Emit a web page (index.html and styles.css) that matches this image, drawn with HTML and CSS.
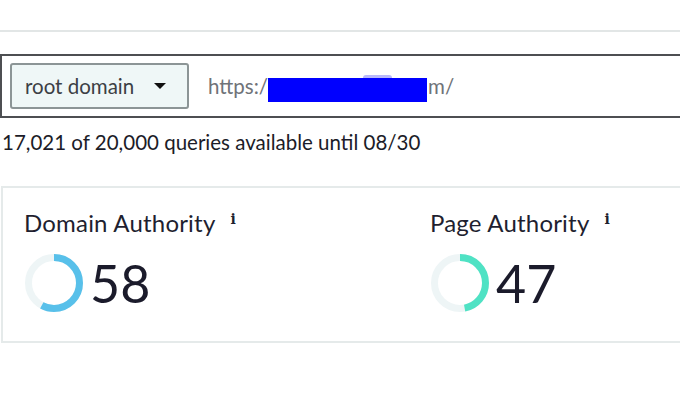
FILE: index.html
```html
<!DOCTYPE html>
<html lang="en">
<head>
    <meta charset="UTF-8">
    <meta name="viewport" content="width=device-width, initial-scale=1.0">
    <title>Link Explorer</title>
    <link rel="stylesheet" href="styles.css">
</head>
<body>

<div class="page">
    <div class="rule"></div>

    <div class="search">
        <div class="dropdown">
            <span>root domain</span>
            <span class="caret"></span>
        </div>
        <div class="url">https:/<span class="redact"><span class="redact-bump"></span></span>m/</div>
    </div>

    <p class="quota">17,021 of 20,000 queries available until 08/30</p>

    <div class="card">
        <div class="metric">
            <h3>Domain Authority<sup class="info">i</sup></h3>
            <div class="score">
                <svg class="ring" width="60" height="60" viewBox="0 0 60 60">
                    <circle class="track" cx="30" cy="30" r="25.5"></circle>
                    <circle class="bar da" cx="30" cy="30" r="25.5" pathLength="100" stroke-dasharray="58 100"></circle>
                </svg>
                <span class="value">58</span>
            </div>
        </div>
        <div class="metric">
            <h3>Page Authority<sup class="info">i</sup></h3>
            <div class="score">
                <svg class="ring" width="60" height="60" viewBox="0 0 60 60">
                    <circle class="track" cx="30" cy="30" r="25.5"></circle>
                    <circle class="bar pa" cx="30" cy="30" r="25.5" pathLength="100" stroke-dasharray="47 100"></circle>
                </svg>
                <span class="value">47</span>
            </div>
        </div>
    </div>
</div>

</body>
</html>
```

FILE: styles.css
```css
body {
    margin: 0;
    padding: 0;
    background-color: #fff;
    font-family: Lato, "Open Sans", sans-serif;
    color: #1f1f30;
    overflow: hidden;
}
.page {
    padding-top: 30px;
}
.rule {
    height: 2px;
    background-color: #e2e6e6;
    margin-bottom: 22px;
}
.search {
    display: flex;
    align-items: center;
    height: 60px;
    padding-left: 8px;
    border: 2px solid #4d4f52;
    border-right: none;
}
.dropdown {
    display: flex;
    align-items: center;
    justify-content: space-between;
    box-sizing: border-box;
    width: 179px;
    height: 46px;
    padding: 0 21px 0 13px;
    background-color: #eff7f7;
    border: 2px solid #8c9596;
    border-radius: 3px;
    font-size: 20.5px;
    color: #3c3f45;
}
.caret {
    width: 0;
    height: 0;
    border-left: 6px solid transparent;
    border-right: 6px solid transparent;
    border-top: 6px solid #111;
}
.url {
    display: flex;
    align-items: center;
    margin-left: 19px;
    font-size: 20.5px;
    color: #6f7378;
}
.redact {
    position: relative;
    display: inline-block;
    width: 159px;
    height: 24px;
    margin: 7px 1px 0 0;
    background-color: #0000ff;
}
.redact-bump {
    position: absolute;
    left: 95px;
    top: -3px;
    width: 29px;
    height: 3px;
    border-radius: 6px 6px 0 0;
    background-color: #b8b8fa;
}
.quota {
    margin: 12px 0 0 2px;
    font-size: 20.5px;
    line-height: 24px;
    color: #1c1c28;
}
.card {
    display: flex;
    box-sizing: border-box;
    height: 157px;
    margin: 32px 0 0 1px;
    padding: 20px 0 0 21px;
    border: 2px solid #e5eaea;
    border-right: none;
}
.metric {
    flex: 0 0 406px;
}
.metric + .metric {
    flex: 1 1 auto;
}
.metric h3 {
    margin: 0;
    font-size: 24px;
    font-weight: 400;
    line-height: 30px;
    letter-spacing: 0.2px;
}
.info {
    position: relative;
    top: -4px;
    margin-left: 15px;
    font-family: "DejaVu Serif", serif;
    font-size: 14px;
    font-weight: 700;
    vertical-align: top;
}
.score {
    display: flex;
    align-items: center;
    margin-top: 15px;
}
.ring {
    transform: rotate(-90deg);
    fill: none;
    stroke-width: 7;
}
.track {
    stroke: #eef5f6;
}
.bar.da {
    stroke: #58c0ea;
}
.bar.pa {
    stroke: #4fe2c4;
}
.value {
    margin-left: 6px;
    font-size: 52px;
    line-height: 60px;
    color: #1b1b2b;
}
```
